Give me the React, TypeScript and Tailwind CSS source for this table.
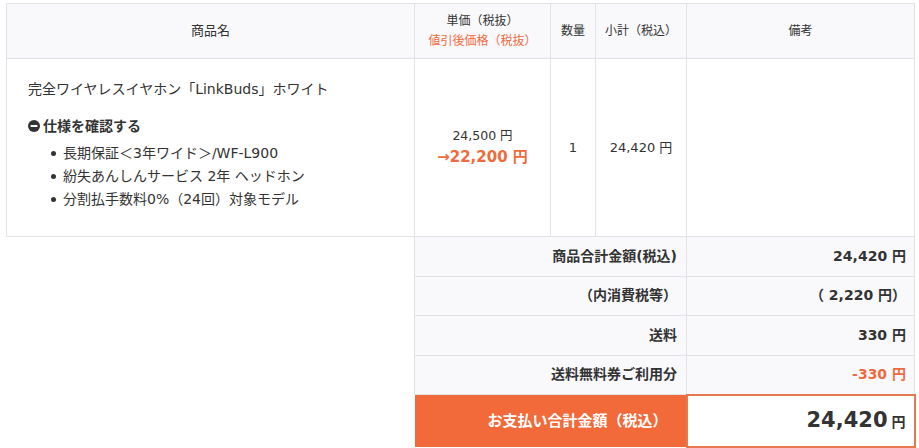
const font = {
  fontFamily: '"DejaVu Sans", "Noto Sans CJK JP", sans-serif',
};

const MinusCircle = () => (
  <svg width="12" height="12" viewBox="0 0 12 12" className="mr-[3px] shrink-0">
    <circle cx="6" cy="6" r="6" fill="#333" />
    <rect x="2.6" y="5" width="6.8" height="2" fill="#fff" />
  </svg>
);

const specs = [
  "長期保証＜3年ワイド＞/WF-L900",
  "紛失あんしんサービス 2年 ヘッドホン",
  "分割払手数料0%（24回）対象モデル",
];

const summaryRows = [
  { label: "商品合計金額(税込)", value: "24,420 円", accent: false },
  { label: "（内消費税等）", value: "（ 2,220 円）", accent: false },
  { label: "送料", value: "330 円", accent: false },
  { label: "送料無料券ご利用分", value: "-330 円", accent: true },
];

export default function App() {
  return (
    <div className="w-[919px] h-[448px] bg-white pl-[6px] pt-[3px] text-[#333]" style={font}>
      <table className="border-collapse table-fixed w-[908px] text-[13px]">
        <colgroup>
          <col className="w-[408px]" />
          <col className="w-[136px]" />
          <col className="w-[45px]" />
          <col className="w-[91px]" />
          <col className="w-[228px]" />
        </colgroup>
        <thead>
          <tr className="h-[55px] bg-[#f9f9fc]">
            <th className="border border-[#e2e2e8] font-normal">商品名</th>
            <th className="border border-[#e2e2e8] font-normal leading-[20px] text-[12px]">
              <div>単価（税抜）</div>
              <div className="text-[#ef6a3c]">値引後価格（税抜）</div>
            </th>
            <th className="border border-[#e2e2e8] font-normal text-[12px]">数量</th>
            <th className="border border-[#e2e2e8] font-normal text-[12px]">小計（税込）</th>
            <th className="border border-[#e2e2e8] font-normal text-[12px]">備考</th>
          </tr>
        </thead>
        <tbody>
          <tr className="h-[178px]">
            <td className="border border-[#e2e2e8] pl-[21px] align-top pt-[19px]">
              <div className="text-[14px] leading-[22px]">完全ワイヤレスイヤホン「LinkBuds」ホワイト</div>
              <div className="mt-[15px] flex items-center text-[14px] font-bold leading-[22px]">
                <MinusCircle />
                仕様を確認する
              </div>
              <ul className="mt-[5px] pl-[23px]">
                {specs.map((s) => (
                  <li key={s} className="flex items-center text-[14px] leading-[23px]">
                    <span className="w-[5px] h-[5px] rounded-full bg-[#333] mr-[7px] shrink-0" />
                    {s}
                  </li>
                ))}
              </ul>
            </td>
            <td className="border border-[#e2e2e8] text-center">
              <div className="text-[12.5px] leading-[22px] -mt-[3px]">24,500 円</div>
              <div className="text-[15px] font-bold text-[#ef6a3c] leading-[20px]">→22,200 円</div>
            </td>
            <td className="border border-[#e2e2e8] text-center text-[13px]">1</td>
            <td className="border border-[#e2e2e8] text-center text-[13px]">24,420 円</td>
            <td className="border border-[#e2e2e8]"></td>
          </tr>
          {summaryRows.map((r) => (
            <tr key={r.label} className="h-[39.5px]">
              <td className="border-0"></td>
              <td colSpan={3} className="border border-[#e2e2e8] bg-[#f9f9fc] text-right pr-[9px] font-bold text-[14px]">
                {r.label}
              </td>
              <td
                className={`border border-[#e2e2e8] bg-[#f9f9fc] text-right pr-[8px] font-bold text-[14px] ${
                  r.accent ? "text-[#ef6a3c]" : ""
                }`}
              >
                {r.value}
              </td>
            </tr>
          ))}
          <tr className="h-[52px]">
            <td className="border-0"></td>
            <td colSpan={3} className="bg-[#f26a3a] text-white text-right pr-[18px] font-bold text-[15px]">
              お支払い合計金額（税込）
            </td>
            <td className="border-2 border-[#e8794f] bg-white text-right pr-[8px] font-bold">
              <span className="text-[21px]">24,420</span>
              <span className="text-[14px] ml-[4px]">円</span>
            </td>
          </tr>
        </tbody>
      </table>
    </div>
  );
}
